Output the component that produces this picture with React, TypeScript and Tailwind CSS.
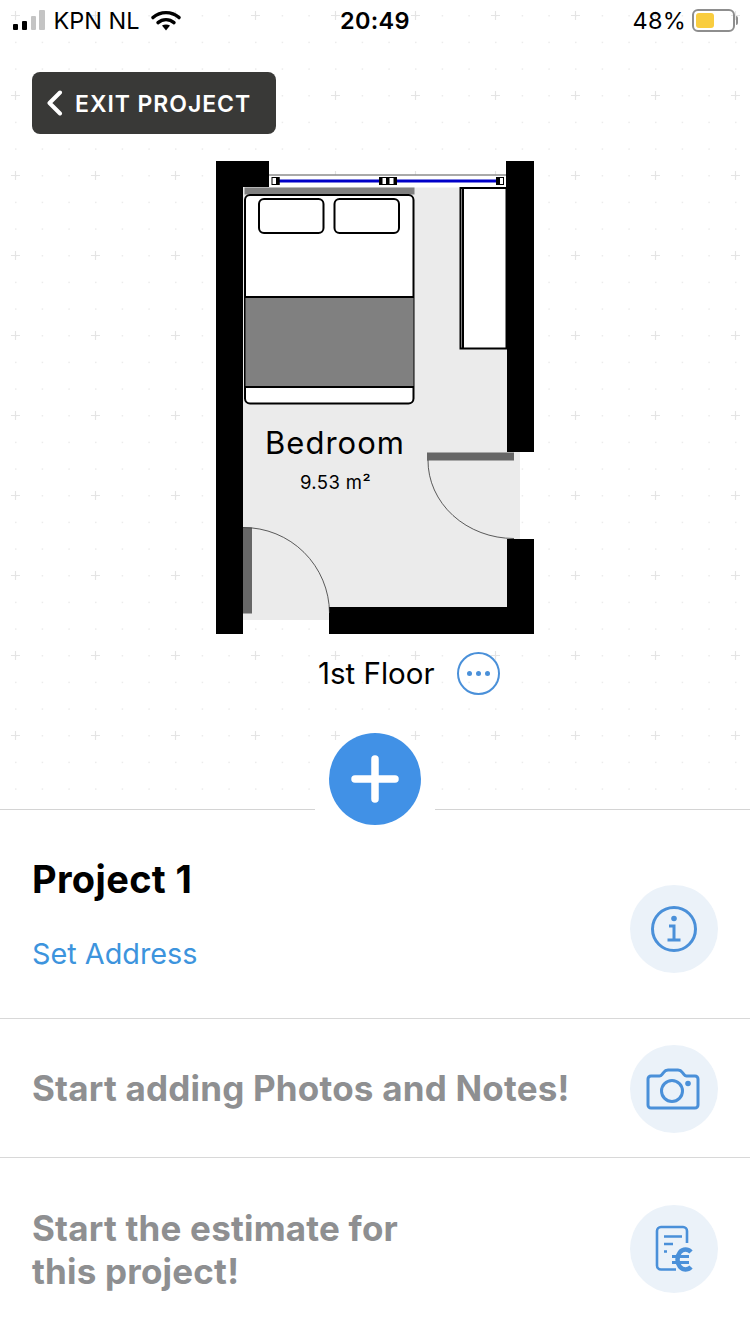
export default function App() {
  return (
    <div className="w-[750px] h-[1334px] bg-white overflow-hidden font-['Inter',sans-serif] text-black">
      {/* Canvas */}
      <section className="relative h-[809px] flex flex-col">
        <GridBackground />
        <StatusBar />

        <button className="relative mt-[31px] ml-[32px] w-[244px] h-[62px] shrink-0 rounded-lg bg-[#393937] flex items-center pl-[14px] gap-[12px] text-white">
          <svg width="17" height="26" viewBox="0 0 17 26" fill="none">
            <path d="M14 2.5 3.5 13 14 23.500" stroke="#fff" strokeWidth="4" strokeLinecap="round" strokeLinejoin="round" />
          </svg>
          <span className="pt-[2px] text-[23px] leading-none font-semibold tracking-[0.95px]">EXIT PROJECT</span>
        </button>

        <div className="relative mt-[27px] mx-auto w-[318px] h-[473px] shrink-0">
          <FloorPlan />
          <div className="absolute left-[29px] top-[262px] w-[180px] text-center text-[31px] leading-[40px] tracking-[1px]">Bedroom</div>
          <div className="absolute left-[29px] top-[309px] w-[181px] text-center text-[18.5px] leading-[24px] tracking-[0.4px]">9.53 m²</div>
        </div>

        <div className="relative mt-[17px] pl-[318px] flex items-center gap-[22px] shrink-0">
          <span className="text-[29.5px] leading-[44px]">1st Floor</span>
          <button className="w-[43px] h-[43px] rounded-full border-2 border-[#4a90d9] flex items-center justify-center gap-[4px]">
            <span className="w-[5px] h-[5px] rounded-full bg-[#4a90d9]" />
            <span className="w-[5px] h-[5px] rounded-full bg-[#4a90d9]" />
            <span className="w-[5px] h-[5px] rounded-full bg-[#4a90d9]" />
          </button>
        </div>

        <button className="relative z-10 mt-[38px] self-center w-[92px] h-[92px] shrink-0 rounded-full bg-[#4191e6] flex items-center justify-center">
          <svg width="48" height="48" viewBox="0 0 48 48" fill="none">
            <path d="M24 4v40M4 24h40" stroke="#fff" strokeWidth="7.500" strokeLinecap="round" />
          </svg>
        </button>
      </section>

      {/* Divider broken by the add button */}
      <div className="flex justify-between">
        <div className="w-[315px] h-px bg-[#d4d4d4]" />
        <div className="w-[315px] h-px bg-[#d4d4d4]" />
      </div>

      {/* Project info */}
      <div className="h-[209px] flex justify-between pl-[32px] pr-[32px] border-b border-[#d8d8d8]">
        <div className="pt-[46px]">
          <h1 className="text-[38px] leading-[46px] font-bold tracking-[0.35px]">Project 1</h1>
          <p className="mt-[32px] text-[28.8px] leading-[40px] text-[#3d94dd]">Set Address</p>
        </div>
        <div className="pt-[75px]">
          <IconCircle><InfoIcon /></IconCircle>
        </div>
      </div>

      <div className="h-[139px] flex items-center justify-between pl-[32px] pr-[32px] border-b border-[#d8d8d8]">
        <p className="text-[35px] leading-[43px] font-bold text-[#8e8f91] tracking-[0.2px]">Start adding Photos and Notes!</p>
        <div className="mt-[2px]">
          <IconCircle><CameraIcon /></IconCircle>
        </div>
      </div>

      <div className="flex justify-between pl-[32px] pr-[32px] pt-[47px]">
        <p className="pt-[2px] text-[35px] leading-[43px] font-bold text-[#8e8f91] tracking-[0.2px]">
          Start the estimate for
          <br />
          this project!
        </p>
        <IconCircle><EstimateIcon /></IconCircle>
      </div>
    </div>
  )
}

function StatusBar() {
  return (
    <div className="relative h-[41px] shrink-0 grid grid-cols-[1fr_auto_1fr] items-center text-[23.5px] leading-none">
      <div className="flex items-center pl-[13px]">
        <div className="flex items-end gap-[3.5px] h-[20px] mb-[1px]">
          <span className="w-[5px] h-[6.5px] rounded-[1px] bg-black" />
          <span className="w-[5.5px] h-[9px] rounded-[1px] bg-black" />
          <span className="w-[5px] h-[14px] rounded-[1px] bg-[#c4c4c4]" />
          <span className="w-[5.5px] h-[20px] rounded-[1px] bg-[#c4c4c4]" />
        </div>
        <span className="ml-[9px]">KPN NL</span>
        <svg className="ml-[11px]" width="30" height="21" viewBox="0 0 30 21" fill="none">
          <path d="M2 7.600C9.400.9 20.600.9 28 7.600" stroke="#000" strokeWidth="3.400" strokeLinecap="round" />
          <path d="M7 12.600c4.600-4 11.400-4 16 0" stroke="#000" strokeWidth="3.400" strokeLinecap="round" />
          <path d="M11 15.600c2.400-1.600 5.600-1.600 8 0l-4 4.800z" fill="#000" />
        </svg>
      </div>
      <span className="font-semibold tracking-[0.3px]">20:49</span>
      <div className="flex items-center justify-end pr-[12px]">
        <span className="tracking-[0.2px]">48%</span>
        <div className="ml-[6px] w-[43px] h-[23px] rounded-[6px] border-2 border-[#8e8e8e] p-[2px]">
          <div className="w-[18px] h-full rounded-[3px] bg-[#f9cd3f]" />
        </div>
        <div className="ml-[1px] w-[2px] h-[9px] rounded-r-full bg-[#8e8e8e]" />
      </div>
    </div>
  )
}

function GridBackground() {
  return (
    <svg className="absolute inset-0" width="750" height="809">
      <defs>
        <pattern id="grid" x="15" y="15" width="80" height="80" patternUnits="userSpaceOnUse">
          {[0, 26.67, 53.33].map((x) =>
            [0, 26.67, 53.33].map((y) => (
              <rect key={`${x}-${y}`} x={x} y={y} width="1.5" height="1.5" fill="#ececec" />
            )),
          )}
        </pattern>
        <pattern id="cross" x="11" y="11" width="80" height="80" patternUnits="userSpaceOnUse">
          <path d="M4.500 0v9M0 4.500h9" stroke="#e4e4e4" strokeWidth="1.200" />
        </pattern>
      </defs>
      <rect width="750" height="809" fill="url(#grid)" />
      <rect width="750" height="809" fill="url(#cross)" />
    </svg>
  )
}

function FloorPlan() {
  return (
    <svg className="absolute inset-0" width="318" height="473" viewBox="216 161 318 473" fill="none">
      {/* floor */}
      <path d="M243 187H507V452H520V539H507V607H329V620H243Z" fill="#ebebeb" />

      {/* window */}
      <rect x="268" y="174.500" width="238" height="13" fill="#fff" />
      <path d="M268 175H506" stroke="#555" strokeWidth="1" />
      <path d="M275 181H497" stroke="#0000c8" strokeWidth="2.800" />
      <rect x="272" y="177.500" width="7" height="7" fill="#fff" stroke="#000" strokeWidth="1" />
      <rect x="276" y="177" width="3.500" height="8" fill="#000" />
      <rect x="379.500" y="177.500" width="7" height="7" fill="#fff" stroke="#000" strokeWidth="1" />
      <rect x="379" y="177" width="3.500" height="8" fill="#000" />
      <rect x="387" y="177" width="10" height="8" fill="#000" />
      <rect x="389.500" y="178" width="4" height="6" fill="#fff" />
      <rect x="496.500" y="177.500" width="7" height="7" fill="#fff" stroke="#000" strokeWidth="1" />
      <rect x="496" y="177" width="4" height="8" fill="#000" />

      {/* wardrobe */}
      <rect x="460.500" y="188" width="46" height="160.500" fill="#fff" stroke="#000" strokeWidth="2" />
      <path d="M463 188V348" stroke="#000" strokeWidth="2" />

      {/* bed */}
      <rect x="244.500" y="187.500" width="170" height="7" fill="#808080" />
      <rect x="245" y="195" width="168.500" height="208.500" rx="5" fill="#fff" stroke="#000" strokeWidth="2" />
      <rect x="245.500" y="297" width="168" height="90" fill="#808080" />
      <path d="M245 297H414M245 387H414" stroke="#000" strokeWidth="2" />
      <rect x="259" y="199" width="64.500" height="34" rx="5" fill="#fff" stroke="#000" strokeWidth="2" />
      <rect x="334.500" y="199" width="64.500" height="34" rx="5" fill="#fff" stroke="#000" strokeWidth="2" />

      {/* walls */}
      <path d="M216 161H269V187H243V634H216Z" fill="#000" />
      <path d="M506 161H534V452H507V187H506Z" fill="#000" />
      <path d="M507 539H534V634H329V607H507Z" fill="#000" />

      {/* doors */}
      <rect x="427" y="452.500" width="87" height="8" fill="#666" />
      <path d="M428 460A86 78 0 0 0 514 538.500" stroke="#333" strokeWidth="0.800" />
      <rect x="243" y="527.500" width="9" height="86" fill="#666" />
      <path d="M243 527.500A86 86 0 0 1 329.500 613" stroke="#333" strokeWidth="0.800" />
    </svg>
  )
}

function IconCircle({ children }: { children: React.ReactNode }) {
  return (
    <div className="w-[88px] h-[88px] shrink-0 rounded-full bg-[#ebf2f9] flex items-center justify-center">
      {children}
    </div>
  )
}

function InfoIcon() {
  return (
    <svg width="46" height="46" viewBox="0 0 46 46" fill="none">
      <circle cx="23" cy="23" r="21.500" stroke="#4a90d9" strokeWidth="3" />
      <circle cx="23" cy="12.500" r="2.800" fill="#4a90d9" />
      <path d="M18 20h5v14M16.500 34h13" stroke="#4a90d9" strokeWidth="3" />
    </svg>
  )
}

function CameraIcon() {
  return (
    <svg className="mr-[2px]" width="54" height="42" viewBox="0 0 54 42" fill="none">
      <path
        d="M5 8h8.500c1 0 1.800-.5 2.400-1.300l1.800-2.400C18.600 3 20 2 22 2h10c2 0 3.400 1 4.300 2.300l1.800 2.400c.6.800 1.400 1.300 2.400 1.300H49c1.700 0 3 1.300 3 3v26c0 1.700-1.300 3-3 3H5c-1.700 0-3-1.300-3-3V11c0-1.700 1.300-3 3-3Z"
        stroke="#4a90d9"
        strokeWidth="3"
      />
      <circle cx="26" cy="23" r="10.500" stroke="#4a90d9" strokeWidth="3" />
      <circle cx="42" cy="15.500" r="2.800" fill="#4a90d9" />
    </svg>
  )
}

function EstimateIcon() {
  return (
    <svg width="38" height="48" viewBox="0 0 38 48" fill="none">
      <path
        d="M21 44.500H6c-2.200 0-4-1.800-4-4V6c0-2.200 1.800-4 4-4h22c2.200 0 4 1.800 4 4v12"
        stroke="#4a90d9"
        strokeWidth="2.600"
      />
      <path d="M9 11.500h18M9 19h9M9 26.500h3" stroke="#4a90d9" strokeWidth="2.600" />
      <path d="M36 27c-1.500-1.600-3.400-2.500-5.500-2.500-4.500 0-8 4.200-8 10s3.500 10 8 10c2.100 0 4-.9 5.500-2.500" stroke="#4a90d9" strokeWidth="4.500" />
      <path d="M17 31.500h17M17 37.500h17" stroke="#4a90d9" strokeWidth="3" />
    </svg>
  )
}
